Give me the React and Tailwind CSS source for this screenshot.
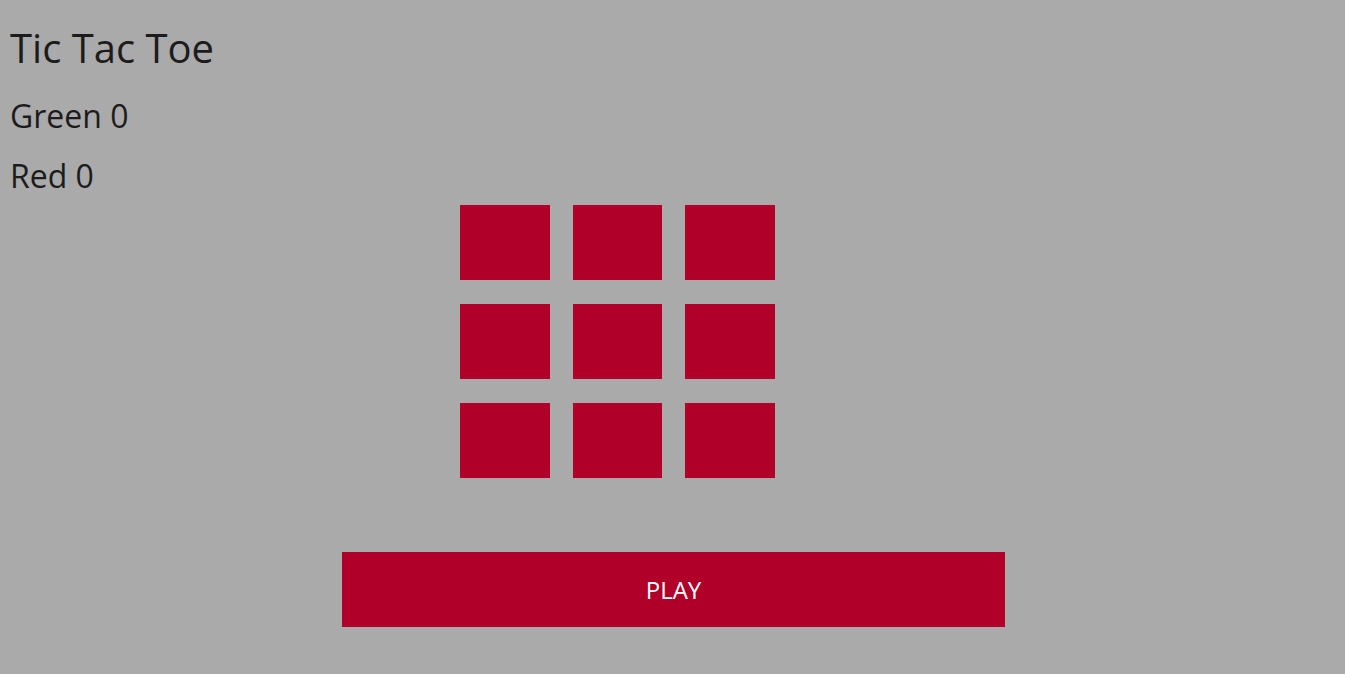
export default function App() {
  const cells = Array.from({ length: 9 });
  return (
    <div className="min-h-[674px] bg-[#aaaaaa] px-[10px] pt-[24px] text-[#1c1c1c]" style={{ fontFamily: '"Open Sans", "Noto Sans", sans-serif' }}>
      <h1 className="text-[40px] leading-[48px]">Tic Tac Toe</h1>
      <div className="mt-[26px] text-[32px] leading-[36px]">Green 0</div>
      <div className="mt-[24px] text-[32px] leading-[36px]">Red 0</div>
      <div className="ml-[450px] mt-[11px] grid w-[315px] grid-cols-3 gap-x-[23px] gap-y-[24px]">
        {cells.map((_, i) => (
          <div key={i} className="h-[75px] bg-[#b00029]" />
        ))}
      </div>
      <button className="ml-[332px] mt-[74px] flex h-[75px] w-[663px] items-center justify-center bg-[#b00029] text-[24px] text-white">
        PLAY
      </button>
    </div>
  );
}
